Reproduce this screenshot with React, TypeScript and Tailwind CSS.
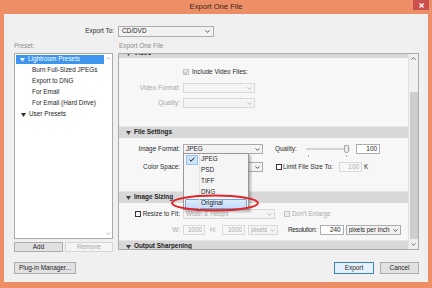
import React from "react";

const Chev = ({ color = "#555" }: { color?: string }) => (
  <svg width="5" height="3" viewBox="0 0 5 3" className="shrink-0">
    <path d="M0.5 0.4 L2.5 2.4 L4.5 0.4" fill="none" stroke={color} strokeWidth="0.9" />
  </svg>
);

const Tri = ({ color = "#333" }: { color?: string }) => (
  <svg width="5" height="4" viewBox="0 0 5 4" className="shrink-0">
    <path d="M0 0 H5 L2.5 4 Z" fill={color} />
  </svg>
);

function Select({ w, text, disabled }: { w: string; text: string; disabled?: boolean }) {
  return (
    <div
      className={`flex h-[10px] shrink-0 items-center justify-between border px-[2px] ${w} ${
        disabled ? "border-[#D9D9D9] bg-[#F4F4F4] text-[#ABABAB]" : "border-[#ACACAC] bg-[#F2F2F2] text-[#1E1E1E]"
      }`}
    >
      <span className="truncate">{text}</span>
      <Chev color={disabled ? "#B8B8B8" : "#444"} />
    </div>
  );
}

function Input({ w, text, disabled }: { w: string; text: string; disabled?: boolean }) {
  return (
    <div
      className={`flex h-[10px] shrink-0 items-center justify-end border px-[2px] ${w} ${
        disabled ? "border-[#D9D9D9] bg-[#F7F7F7] text-[#ABABAB]" : "border-[#ABADB3] bg-white text-[#1E1E1E]"
      }`}
    >
      {text}
    </div>
  );
}

function Check({ checked, disabled }: { checked?: boolean; disabled?: boolean }) {
  return (
    <div
      className={`flex h-[6px] w-[6px] shrink-0 items-center justify-center border ${
        disabled ? "border-[#C4C4C4] bg-[#ECECEC]" : "border-[#333] bg-white"
      }`}
    >
      {checked && (
        <svg width="5" height="5" viewBox="0 0 5 5">
          <path d="M0.6 2.6 L1.9 3.9 L4.4 0.9" fill="none" stroke={disabled ? "#888" : "#222"} strokeWidth="0.9" />
        </svg>
      )}
    </div>
  );
}

function Header({ title, className = "" }: { title: string; className?: string }) {
  return (
    <div className={`flex h-[12px] shrink-0 items-center gap-[3px] border-t border-[#E6E6E6] bg-[#D8D8D8] pl-[7px] font-bold text-[#222] ${className}`}>
      <Tri color="#444" />
      <span>{title}</span>
    </div>
  );
}

function Label({ children, dim }: { children?: React.ReactNode; dim?: boolean }) {
  return (
    <div className={`flex w-[61px] shrink-0 items-center justify-end gap-[1px] ${dim ? "text-[#A8A8A8]" : "text-[#2A2A2A]"}`}>
      {children}
    </div>
  );
}

function Btn({ w, text, disabled, primary }: { w: string; text: string; disabled?: boolean; primary?: boolean }) {
  return (
    <div
      className={`flex h-full shrink-0 items-center justify-center border ${w} ${
        disabled
          ? "border-[#D5D5D5] bg-[#F4F4F4] text-[#A8A8A8]"
          : primary
          ? "border-[#3C7FB1] bg-[#E5F1FB] text-[#1E1E1E]"
          : "border-[#ADADAD] bg-[#E1E1E1] text-[#1E1E1E]"
      }`}
    >
      {text}
    </div>
  );
}

const PRESETS = ["Burn Full-Sized JPEGs", "Export to DNG", "For Email", "For Email (Hard Drive)"];
const FORMATS = ["JPEG", "PSD", "TIFF", "DNG"];

export default function App() {
  return (
    <div className="relative flex h-[288px] w-[432px] flex-col overflow-hidden bg-[#EC8F66] font-['Liberation_Sans',Arial,sans-serif] text-[6.4px] leading-none text-[#1E1E1E]">
      {/* Title bar */}
      <div className="grid h-[14px] shrink-0 grid-cols-[1fr_auto_1fr] items-start">
        <div />
        <div className="pt-[3px] text-[7.6px] text-[#3A2416]">Export One File</div>
        <div className="flex justify-end pr-[3px]">
          <div className="flex h-[10px] w-[16px] items-center justify-center bg-[#C9504C]">
            <svg width="5" height="5" viewBox="0 0 5 5">
              <path d="M0.5 0.5 L4.5 4.5 M4.5 0.5 L0.5 4.5" stroke="#fff" strokeWidth="1.2" />
            </svg>
          </div>
        </div>
      </div>

      {/* Body */}
      <div className="mx-[4px] mb-[6px] flex flex-1 flex-col bg-[#F0F0F0] pl-[10px] pr-[9px]">
        {/* Export To */}
        <div className="mt-[12px] flex h-[11px] items-center gap-[4px]">
          <div className="w-[100px] text-right text-[#2A2A2A]">Export To:</div>
          <div className="flex h-[11px] w-[96px] items-center justify-between border border-[#ACACAC] bg-[#F2F2F2] pl-[3px] pr-[3px]">
            <span>CD/DVD</span>
            <Chev color="#444" />
          </div>
        </div>

        {/* Section labels */}
        <div className="mt-[5px] flex h-[8px] items-center gap-[5px] text-[#8C8C8C]">
          <div className="w-[99px]">Preset:</div>
          <div className="pl-[1px]">Export One File</div>
        </div>

        <div className="mt-[3px] flex gap-[5px]">
          {/* Left column */}
          <div className="flex w-[99px] flex-col">
            <div className="flex h-[186px] border border-[#ABABAB] bg-white">
              <div className="flex flex-1 flex-col pl-[1px]">
                <div className="flex h-[11px] items-center">
                  <div className="flex h-[9px] w-full items-center gap-[3px] bg-[#3D95EE] pl-[4px] text-white">
                    <Tri color="#E8F1FB" />
                    <span>Lightroom Presets</span>
                  </div>
                </div>
                {PRESETS.map((p) => (
                  <div key={p} className="flex h-[11px] items-center pl-[16px] text-[#1E1E1E]">
                    {p}
                  </div>
                ))}
                <div className="flex h-[11px] items-center gap-[3px] pl-[5px]">
                  <Tri color="#333" />
                  <span>User Presets</span>
                </div>
              </div>
              <div className="flex w-[8px] flex-col items-center justify-between py-[3px]">
                <svg width="5" height="3" viewBox="0 0 5 3">
                  <path d="M0.5 2.6 L2.5 0.6 L4.5 2.6" fill="none" stroke="#B0B0B0" strokeWidth="0.9" />
                </svg>
                <Chev color="#B0B0B0" />
              </div>
            </div>
            <div className="mt-[3px] flex h-[10px] gap-[2px]">
              <Btn w="w-[49px]" text="Add" />
              <Btn w="w-[48px]" text="Remove" disabled />
            </div>
          </div>

          {/* Right panel */}
          <div className="flex h-[197px] w-[301px] border border-[#ABABAB] bg-[#F7F7F7]">
            <div className="flex flex-1 flex-col overflow-hidden">
              <div className="h-[4px] shrink-0 overflow-hidden bg-[#D8D8D8]">
                <div className="-mt-[5px] flex h-[9px] items-center gap-[3px] pl-[7px] font-bold">
                  <Tri color="#444" />
                  <span>Video</span>
                </div>
              </div>

              <div className="mt-[9px] flex h-[10px] shrink-0 items-center gap-[3px]">
                <Label />
                <Check checked disabled />
                <span className="text-[#2A2A2A]">Include Video Files:</span>
              </div>
              <div className="mt-[6px] flex h-[10px] shrink-0 items-center gap-[3px]">
                <Label dim>Video Format:</Label>
                <Select w="w-[72px]" text="" disabled />
              </div>
              <div className="mt-[5px] flex h-[10px] shrink-0 items-center gap-[3px]">
                <Label dim>Quality:</Label>
                <Select w="w-[72px]" text="" disabled />
              </div>

              <Header title="File Settings" className="mt-[18px]" />

              <div className="mt-[6px] flex h-[10px] shrink-0 items-center gap-[3px]">
                <Label>Image Format:</Label>
                <Select w="w-[80px]" text="JPEG" />
                <span className="ml-[9px] w-[28px] text-[#2A2A2A]">Quality:</span>
                <div className="relative flex h-[10px] w-[44px] items-center">
                  <div className="h-[2px] w-full border border-[#D4D4D4] bg-[#E6E6E6]" />
                  <div className="absolute right-[1px] top-[1px] h-[8px] w-[5px] rounded-b-[2px] border border-[#A9A9A9] bg-[#EAEAEA]" />
                  <div className="absolute -bottom-[3px] left-[2px] h-[2px] w-[1px] bg-[#B5B5B5]" />
                  <div className="absolute -bottom-[3px] right-[3px] h-[2px] w-[1px] bg-[#B5B5B5]" />
                </div>
                <Input w="w-[24px] ml-[3px]" text="100" />
              </div>
              <div className="mt-[8px] flex h-[10px] shrink-0 items-center gap-[3px]">
                <Label>Color Space:</Label>
                <Select w="w-[80px]" text="sRGB" />
                <div className="ml-[10px] flex items-center gap-[1px]">
                  <Check />
                  <span className="w-[53px] text-[#2A2A2A]">Limit File Size To:</span>
                </div>
                <Input w="w-[23px]" text="100" disabled />
                <span className="ml-[-1px] text-[#2A2A2A]">K</span>
              </div>

              <Header title="Image Sizing" className="mt-[19px]" />

              <div className="mt-[6px] flex h-[10px] shrink-0 items-center gap-[3px]">
                <Label>
                  <Check />
                  <span className="ml-[1px]">Resize to Fit:</span>
                </Label>
                <Select w="w-[92px]" text="Width & Height" disabled />
                <div className="ml-[6px] flex items-center gap-[2px] text-[#ABABAB]">
                  <Check disabled />
                  <span>Don't Enlarge</span>
                </div>
              </div>
              <div className="mt-[6px] flex h-[10px] shrink-0 items-center gap-[3px]">
                <Label dim>W:</Label>
                <Input w="w-[22px]" text="1000" disabled />
                <span className="ml-[2px] w-[9px] text-[#ABABAB]">H:</span>
                <Input w="w-[23px]" text="1000" disabled />
                <Select w="w-[30px]" text="pixels" disabled />
                <span className="ml-[7px] tracking-[-0.3px] text-[#2A2A2A]">Resolution:</span>
                <Input w="w-[24px]" text="240" />
                <Select w="w-[55px] -ml-[1px]" text="pixels per inch" />
              </div>

              <Header title="Output Sharpening" className="mt-[5px]" />
            </div>

            {/* scrollbar */}
            <div className="flex w-[10px] flex-col items-center border-l border-[#E2E2E2] bg-[#F0F0F0]">
              <div className="flex h-[8px] items-center">
                <svg width="5" height="3" viewBox="0 0 5 3">
                  <path d="M0.5 2.6 L2.5 0.6 L4.5 2.6" fill="none" stroke="#606060" strokeWidth="0.9" />
                </svg>
              </div>
              <div className="mt-[30px] w-[8px] flex-1 bg-[#CDCDCD]" />
              <div className="flex h-[10px] items-center">
                <Chev color="#606060" />
              </div>
            </div>
          </div>
        </div>

        {/* Bottom buttons */}
        <div className="mt-[10px] flex h-[12px] items-stretch">
          <Btn w="w-[62px]" text="Plug-in Manager..." />
          <div className="flex-1" />
          <Btn w="w-[40px]" text="Export" primary />
          <div className="w-[6px]" />
          <Btn w="w-[39px]" text="Cancel" />
        </div>
      </div>

      {/* Image Format dropdown menu */}
      <div className="absolute left-[183px] top-[153px] flex h-[57px] w-[66px] flex-col border border-[#979797] bg-[#F5F5F5] shadow-[2px_2px_2px_rgba(0,0,0,0.25)]">
        <div className="absolute bottom-0 left-[15px] top-0 w-[1px] bg-[#E2E2E2]" />
        {FORMATS.map((f, i) => (
          <div key={f} className="flex h-[11px] items-center">
            <div className="flex w-[16px] justify-center">
              {i === 0 && (
                <div className="flex h-[10px] w-[12px] items-center justify-center border border-[#9CC4E8] bg-[#CCE4F7]">
                  <svg width="6" height="5" viewBox="0 0 6 5">
                    <path d="M0.6 2.6 L2.2 4.2 L5.4 0.6" fill="none" stroke="#222" strokeWidth="1" />
                  </svg>
                </div>
              )}
            </div>
            <span className="pl-[1px]">{f}</span>
          </div>
        ))}
        <div className="flex h-[11px] items-center px-[1px]">
          <div className="flex h-[10px] w-full items-center rounded-[1px] border border-[#7DA2CE] bg-[linear-gradient(#DCEBFC,#C1DBFC)] pl-[15px]">
            Original
          </div>
        </div>
      </div>

      {/* red annotation ellipse */}
      <svg className="pointer-events-none absolute left-[170px] top-[193px]" width="90" height="20" viewBox="0 0 90 20">
        <ellipse cx="45" cy="10" rx="43" ry="7.5" fill="none" stroke="#E0262A" strokeWidth="2" />
      </svg>
    </div>
  );
}
